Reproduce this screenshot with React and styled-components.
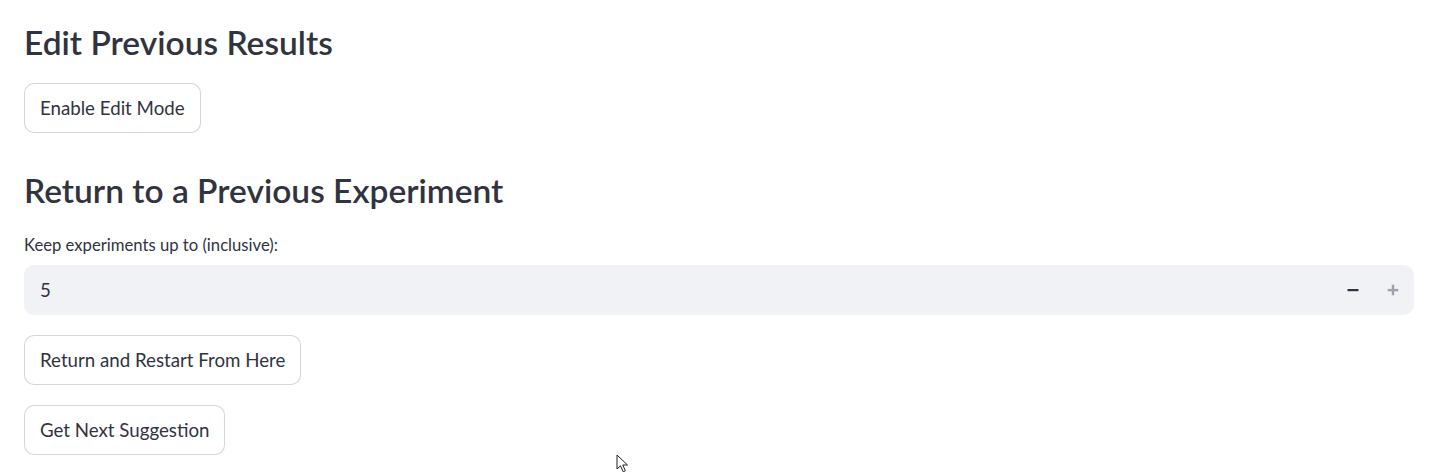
import React from "react";
import styled, { createGlobalStyle } from "styled-components";

const GlobalStyle = createGlobalStyle`
  html, body {
    margin: 0;
    padding: 0;
    background: #ffffff;
  }
  body {
    font-family: "Lato", "Source Sans Pro", sans-serif;
    color: #31333f;
    -webkit-font-smoothing: antialiased;
  }
`;

const Page = styled.main`
  position: relative;
  box-sizing: border-box;
  width: 1432px;
  height: 472px;
  overflow: hidden;
  padding: 22px 18px 0 24px;
  display: flex;
  flex-direction: column;
  align-items: flex-start;
`;

const Heading = styled.h3`
  margin: ${(p) => p.$mt || 0}px 0 0;
  font-size: 33.5px;
  line-height: 40px;
  font-weight: 600;
  color: #31333f;
  white-space: nowrap;
`;

const Button = styled.button`
  box-sizing: border-box;
  margin-top: ${(p) => p.$mt || 0}px;
  height: 50px;
  padding: 0 15px;
  display: inline-flex;
  align-items: center;
  background: #ffffff;
  border: 1px solid rgba(49, 51, 63, 0.2);
  border-radius: 10px;
  font-family: "Lato", sans-serif;
  font-size: 18.7px;
  font-weight: 400;
  color: #31333f;
  white-space: nowrap;
  cursor: pointer;
`;

const Field = styled.div`
  margin-top: 25px;
  width: 100%;
  display: flex;
  flex-direction: column;
  gap: 10px;
`;

const Label = styled.label`
  font-size: 16.66px;
  line-height: 20px;
  color: #31333f;
`;

const InputBox = styled.div`
  box-sizing: border-box;
  width: 100%;
  height: 50px;
  display: flex;
  align-items: center;
  background: #f0f2f6;
  border-radius: 10px;
  padding-right: 1px;
`;

const NumberInput = styled.input`
  flex: 1;
  min-width: 0;
  height: 100%;
  border: none;
  outline: none;
  background: transparent;
  padding: 0 0 0 16px;
  font-family: "Lato", sans-serif;
  font-size: 18.7px;
  color: #31333f;
`;

const StepButton = styled.button`
  width: 40px;
  height: 100%;
  border: none;
  background: transparent;
  padding: 0;
  display: flex;
  align-items: center;
  justify-content: center;
  color: ${(p) => (p.disabled ? "#9ea2ad" : "#31333f")};
  cursor: ${(p) => (p.disabled ? "not-allowed" : "pointer")};
`;

const Cursor = styled.svg`
  position: absolute;
  left: 616px;
  top: 454px;
  pointer-events: none;
`;

const MinusIcon = () => (
  <svg width="12" height="12" viewBox="0 0 12 12">
    <rect x="0.5" y="5" width="11" height="2.2" fill="currentColor" />
  </svg>
);

const PlusIcon = () => (
  <svg width="12" height="12" viewBox="0 0 12 12">
    <rect x="0.7" y="4.9" width="10.6" height="2.4" fill="currentColor" />
    <rect x="4.8" y="0.7" width="2.4" height="10.6" fill="currentColor" />
  </svg>
);

export default function App() {
  return (
    <>
      <GlobalStyle />
      <Page>
        <Heading>Edit Previous Results</Heading>
        <Button $mt={21}>Enable Edit Mode</Button>
        <Heading $mt={37}>Return to a Previous Experiment</Heading>
        <Field>
          <Label htmlFor="keep-upto">Keep experiments up to (inclusive):</Label>
          <InputBox>
            <NumberInput id="keep-upto" type="text" defaultValue="5" />
            <StepButton aria-label="Decrement">
              <MinusIcon />
            </StepButton>
            <StepButton aria-label="Increment" disabled>
              <PlusIcon />
            </StepButton>
          </InputBox>
        </Field>
        <Button $mt={20}>Return and Restart From Here</Button>
        <Button $mt={20}>Get Next Suggestion</Button>
        <Cursor width="13" height="19" viewBox="0 0 13 19">
          <path
            d="M1 1 L1 15 L4.5 11.8 L7.2 17.8 L9.4 16.8 L6.8 11 L11.5 11 Z"
            fill="#ffffff"
            stroke="#222"
            strokeWidth="1"
            strokeLinejoin="round"
          />
        </Cursor>
      </Page>
    </>
  );
}
